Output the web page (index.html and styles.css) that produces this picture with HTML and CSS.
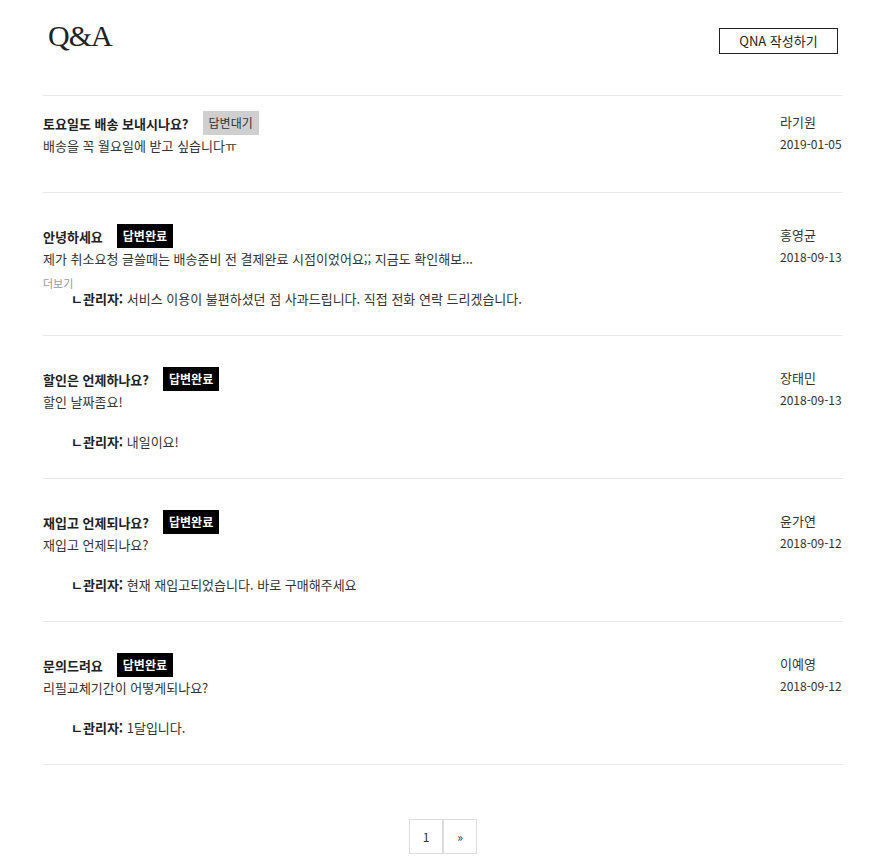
FILE: index.html
```html
<!DOCTYPE html>
<html lang="ko">
<head>
<meta charset="utf-8">
<title>Q&amp;A</title>
<link rel="stylesheet" href="styles.css">
</head>
<body>
<div class="page">
  <header class="head">
    <h1 class="title">Q&amp;A</h1>
    <button class="write-btn">QNA 작성하기</button>
  </header>

  <ul class="qna-list">
    <li class="row">
      <div class="main">
        <div class="q-title"><span class="q-text">토요일도 배송 보내시나요?</span><span class="badge wait">답변대기</span></div>
        <div class="q-body">배송을 꼭 월요일에 받고 싶습니다ㅠ</div>
        <div class="more"></div>
      </div>
      <div class="meta"><div class="name">라기원</div><div class="date">2019-01-05</div></div>
    </li>

    <li class="row answered">
      <div class="main">
        <div class="q-title"><span class="q-text">안녕하세요</span><span class="badge done">답변완료</span></div>
        <div class="q-body">제가 취소요청 글쓸때는 배송준비 전 결제완료 시점이었어요;; 지금도 확인해보...</div>
        <div class="more">더보기</div>
        <div class="answer"><b>ㄴ관리자:</b> 서비스 이용이 불편하셨던 점 사과드립니다. 직접 전화 연락 드리겠습니다.</div>
      </div>
      <div class="meta"><div class="name">홍영균</div><div class="date">2018-09-13</div></div>
    </li>

    <li class="row answered">
      <div class="main">
        <div class="q-title"><span class="q-text">할인은 언제하나요?</span><span class="badge done">답변완료</span></div>
        <div class="q-body">할인 날짜좀요!</div>
        <div class="more"></div>
        <div class="answer"><b>ㄴ관리자:</b> 내일이요!</div>
      </div>
      <div class="meta"><div class="name">장태민</div><div class="date">2018-09-13</div></div>
    </li>

    <li class="row answered">
      <div class="main">
        <div class="q-title"><span class="q-text">재입고 언제되나요?</span><span class="badge done">답변완료</span></div>
        <div class="q-body">재입고 언제되나요?</div>
        <div class="more"></div>
        <div class="answer"><b>ㄴ관리자:</b> 현재 재입고되었습니다. 바로 구매해주세요</div>
      </div>
      <div class="meta"><div class="name">윤가연</div><div class="date">2018-09-12</div></div>
    </li>

    <li class="row answered">
      <div class="main">
        <div class="q-title"><span class="q-text">문의드려요</span><span class="badge done">답변완료</span></div>
        <div class="q-body">리필교체기간이 어떻게되나요?</div>
        <div class="more"></div>
        <div class="answer"><b>ㄴ관리자:</b> 1달입니다.</div>
      </div>
      <div class="meta"><div class="name">이예영</div><div class="date">2018-09-12</div></div>
    </li>
  </ul>

  <nav class="pager">
    <a class="pg">1</a><a class="pg">»</a>
  </nav>
</div>
</body>
</html>
```

FILE: styles.css
```css
html, body {
  margin: 0;
  padding: 0;
  background: #fff;
}
body {
  font-family: "Noto Sans CJK KR", "Noto Sans", sans-serif;
  color: #333;
  font-size: 13px;
}
.page {
  width: 800px;
  margin-left: 43px;
}
.head {
  display: flex;
  justify-content: space-between;
  align-items: flex-start;
  padding: 21px 5px 0 5px;
  margin-bottom: 41px;
}
.title {
  margin: 0;
  font-family: "Liberation Serif", serif;
  font-weight: normal;
  font-size: 30px;
  line-height: 30px;
  letter-spacing: -1px;
  color: #222;
}
.write-btn {
  margin-top: 7px;
  width: 119px;
  height: 26px;
  border: 1px solid #222;
  background: #fff;
  font-family: "Noto Sans CJK KR", "Noto Sans", sans-serif;
  font-size: 13px;
  color: #222;
  padding: 0;
  line-height: 24px;
}
.qna-list {
  list-style: none;
  margin: 0;
  padding: 0;
  border-top: 1px solid #e8e8e8;
}
.row {
  display: flex;
  padding: 15px 0 15px 0;
  border-bottom: 1px solid #e8e8e8;
}
.row.answered {
  padding: 31px 0 27px 0;
}
.main {
  flex: 1;
}
.q-title {
  display: flex;
  align-items: center;
  height: 24px;
}
.q-text {
  font-weight: bold;
  color: #222;
  font-size: 13px;
}
.badge {
  margin-left: 14px;
  height: 24px;
  line-height: 24px;
  padding: 0 6px;
  font-size: 12px;
}
.badge.wait {
  background: #cfcfcf;
  color: #333;
}
.badge.done {
  background: #000;
  color: #fff;
  font-weight: bold;
}
.q-body {
  line-height: 22px;
  color: #333;
}
.more {
  margin-top: 6px;
  height: 14px;
  line-height: 14px;
  font-size: 11px;
  color: #999;
}
.answer {
  padding-left: 28px;
  line-height: 18px;
  color: #333;
}
.answer b {
  color: #222;
}
.meta {
  width: 63px;
  white-space: nowrap;
  line-height: 22px;
  color: #333;
}
.date {
  font-size: 12px;
}
.pager {
  display: flex;
  justify-content: center;
  margin-top: 54px;
}
.pg {
  display: flex;
  align-items: center;
  justify-content: center;
  width: 32px;
  height: 33px;
  border: 1px solid #ddd;
  font-size: 12px;
  color: #333;
}
```
